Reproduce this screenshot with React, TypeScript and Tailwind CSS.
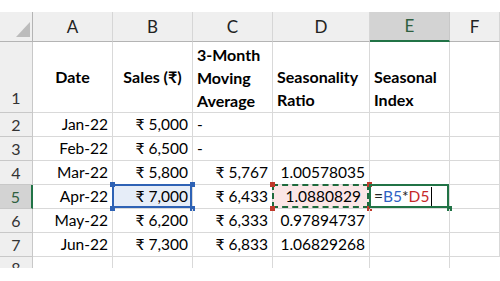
const font = { fontFamily: 'Lato, "Noto Sans", "DejaVu Sans", sans-serif' };

const cols = ['A', 'B', 'C', 'D', 'E', 'F'];

const rows = [
  { n: 2, date: 'Jan-22', sales: '₹ 5,000', avg: '-', ratio: '' },
  { n: 3, date: 'Feb-22', sales: '₹ 6,500', avg: '-', ratio: '' },
  { n: 4, date: 'Mar-22', sales: '₹ 5,800', avg: '₹ 5,767', ratio: '1.00578035' },
  { n: 5, date: 'Apr-22', sales: '₹ 7,000', avg: '₹ 6,433', ratio: '1.0880829' },
  { n: 6, date: 'May-22', sales: '₹ 6,200', avg: '₹ 6,333', ratio: '0.97894737' },
  { n: 7, date: 'Jun-22', sales: '₹ 7,300', avg: '₹ 6,833', ratio: '1.06829268' },
];

const cell = 'border-r border-b border-[#d9d9d9] px-[4px] text-[15.5px] text-black whitespace-nowrap overflow-visible';
const rowHead = 'bg-[#efefef] border-r border-b border-[#c8c8c8] flex items-center justify-center text-[16px] text-[#333]';

const Handle = ({ pos, color }: { pos: string; color: string }) => (
  <span className={`absolute w-[5px] h-[5px] ${pos} ${color}`} />
);

export default function App() {
  return (
    <div className="w-[500px] h-[281px] bg-white overflow-hidden pt-[12px]" style={font}>
      <div className="grid grid-cols-[33px_80px_80px_80px_97px_80px_1fr] grid-rows-[30px_71px_24px_24px_24px_24px_24px_24px_11px]">
        {/* column headers */}
        <div className="bg-[#efefef] border-r border-b border-[#b4b4b4] relative">
          <span className="absolute left-[16px] top-[10px] w-0 h-0 border-l-[14px] border-l-transparent border-b-[15px] border-b-[#bcbcbc]" />
        </div>
        {cols.map((c) =>
          c === 'E' ? (
            <div key={c} className="bg-[#d3d3d3] border-r border-[#c8c8c8] border-b-2 border-b-[#217346] flex items-center justify-center text-[17px] text-[#2f5f40]">
              {c}
            </div>
          ) : (
            <div key={c} className="bg-[#efefef] border-r border-b border-r-[#d6d6d6] border-b-[#b4b4b4] flex items-center justify-center text-[17px] text-[#222]">
              {c}
            </div>
          )
        )}

        {/* row 1 */}
        <div className={`${rowHead} !items-end pb-[2px]`}>1</div>
        <div className={`${cell} flex items-center justify-center font-bold !text-[16px]`}>Date</div>
        <div className={`${cell} flex items-center justify-center font-bold !text-[16px]`}>Sales (₹)</div>
        <div className={`${cell} flex flex-col justify-center font-bold leading-[23px] !text-[16px]`}>
          <span>3-Month</span>
          <span>Moving</span>
          <span>Average</span>
        </div>
        <div className={`${cell} flex flex-col justify-end font-bold leading-[23px] pb-[1px] !text-[16px]`}>
          <span>Seasonality</span>
          <span>Ratio</span>
        </div>
        <div className={`${cell} flex flex-col justify-end font-bold leading-[23px] pb-[1px] !text-[16px]`}>
          <span>Seasonal</span>
          <span>Index</span>
        </div>
        <div className={cell} />

        {rows.map((r) => {
          const sel = r.n === 5;
          return [
            <div
              key={`h${r.n}`}
              className={sel ? 'bg-[#d3d3d3] border-b border-[#c8c8c8] border-r-2 border-r-[#217346] flex items-center justify-center text-[16px] text-[#2f5f40]' : rowHead}
            >
              {r.n}
            </div>,
            <div key={`a${r.n}`} className={`${cell} flex items-center justify-end`}>{r.date}</div>,
            <div key={`b${r.n}`} className={`${cell} flex items-center justify-end relative ${sel ? 'bg-[#e6edf8]' : ''}`}>
              {r.sales}
              {sel && (
                <>
                  <span className="absolute -left-[1px] -top-[1px] right-0 bottom-0 border-2 border-[#2e62b5]" />
                  <Handle pos="-left-[3px] -top-[3px]" color="bg-[#2e62b5]" />
                  <Handle pos="-right-[3px] -top-[3px]" color="bg-[#2e62b5]" />
                  <Handle pos="-left-[3px] -bottom-[3px]" color="bg-[#2e62b5]" />
                  <Handle pos="-right-[3px] -bottom-[3px]" color="bg-[#2e62b5]" />
                </>
              )}
            </div>,
            <div key={`c${r.n}`} className={`${cell} flex items-center ${r.avg === '-' ? 'justify-start' : 'justify-end'}`}>{r.avg}</div>,
            <div key={`d${r.n}`} className={`${cell} flex items-center justify-end relative ${sel ? 'bg-[#fbe6e6] pr-[8px]' : ''}`}>
              {r.ratio}
              {sel && (
                <>
                  <span className="absolute -left-[1px] -top-[1px] right-0 bottom-0 border-2 border-dashed border-[#1f6a3d]" />
                  <Handle pos="-left-[3px] -top-[3px]" color="bg-[#c0392b]" />
                  <Handle pos="-right-[3px] -top-[3px]" color="bg-[#c0392b]" />
                  <Handle pos="-left-[3px] -bottom-[3px]" color="bg-[#c0392b]" />
                  <Handle pos="-right-[3px] -bottom-[3px]" color="bg-[#c0392b]" />
                </>
              )}
            </div>,
            <div key={`e${r.n}`} className={`${cell} flex items-center relative`}>
              {sel && (
                <>
                  <span className="text-[#222]">=</span>
                  <span className="text-[#2f62c4]">B5</span>
                  <span className="text-[#222]">*</span>
                  <span className="text-[#c62828]">D5</span>
                  <span className="ml-[2px] w-[1px] h-[19px] bg-black" />
                  <span className="absolute -left-[1px] -top-[1px] right-0 bottom-0 border-2 border-[#217346]" />
                  <Handle pos="-right-[3px] -bottom-[3px]" color="bg-[#217346]" />
                </>
              )}
            </div>,
            <div key={`f${r.n}`} className={cell} />,
          ];
        })}

        {/* partial row 8 */}
        <div className="bg-[#efefef] border-r border-[#c8c8c8] overflow-hidden flex justify-center text-[16px] text-[#333] leading-[22px]">8</div>
        <div className="border-r border-[#d9d9d9]" />
        <div className="border-r border-[#d9d9d9]" />
        <div className="border-r border-[#d9d9d9]" />
        <div className="border-r border-[#d9d9d9]" />
        <div className="border-r border-[#d9d9d9]" />
        <div />
      </div>
    </div>
  );
}
